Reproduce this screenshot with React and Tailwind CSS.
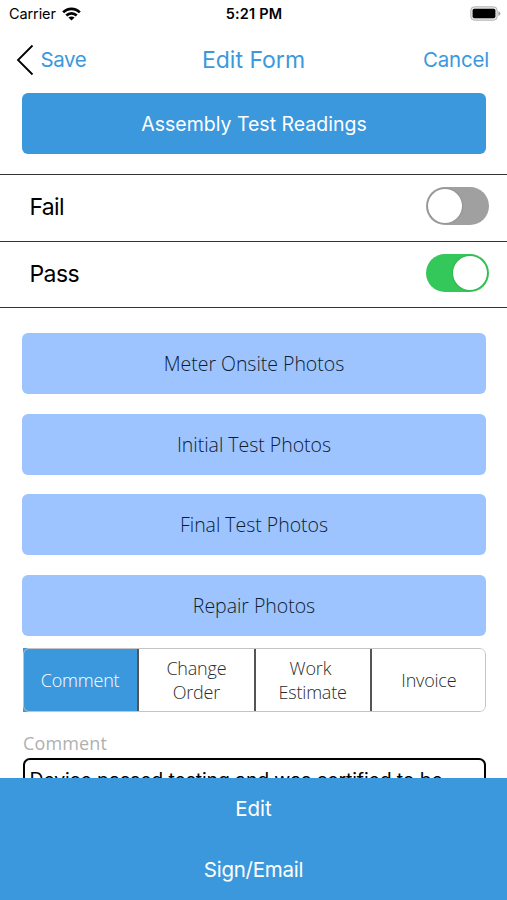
import { useState } from 'react';

const photoButtons = ['Meter Onsite Photos', 'Initial Test Photos', 'Final Test Photos', 'Repair Photos'];

const tabs = [
  { key: 'comment', lines: ['Comment'] },
  { key: 'change', lines: ['Change', 'Order'] },
  { key: 'estimate', lines: ['Work ', 'Estimate'] },
  { key: 'invoice', lines: ['Invoice'] },
];

const StatusBar = () => (
  <div className="grid grid-cols-3 items-center h-[27px] pl-[9px] pr-[6px] text-black">
    <div className="flex items-center gap-[6px]">
      <span className="text-[14.5px] pt-px tracking-[-0.1px]">Carrier</span>
      <svg width="19" height="14" viewBox="0 0 19 14" fill="none" stroke="#000" strokeWidth="2.7">
        <path d="M1.2 5.4 C5.8 0.6 13.2 0.6 17.8 5.4" />
        <path d="M4.3 8.5 C7.2 5.6 11.8 5.6 14.7 8.5" />
        <path d="M9.5 13.6 L6.4 10.6 C8.2 9.1 10.8 9.1 12.6 10.6 Z" fill="#000" stroke="none" />
      </svg>
    </div>
    <span className="text-[14.5px] pr-[2px] tracking-[0.2px] font-semibold text-center whitespace-nowrap">5:21 PM</span>
    <svg className="justify-self-end" width="31" height="15" viewBox="0 0 31 15">
      <rect x="0.8" y="0.8" width="26.4" height="13.4" rx="3.6" fill="#e4e4e4" stroke="#b4b4b4" strokeWidth="1" />
      <rect x="2.6" y="2.8" width="22.8" height="9.4" rx="1.8" fill="#000" />
      <path d="M28.4 5 Q30.4 6 30.4 7.5 Q30.4 9 28.4 10 Z" fill="#a0a0a0" />
    </svg>
  </div>
);

const Toggle = ({ on, onClick }) => (
  <button
    className={`flex items-center w-[63px] h-[38px] px-[2px] rounded-full ${on ? 'bg-[#34c759] justify-end' : 'bg-[#a0a0a0] justify-start'}`}
    onClick={onClick}
  >
    <span className="size-[34px] rounded-full bg-white shadow-[0_0_2px_rgba(0,0,0,0.25)]"></span>
  </button>
);

const App = () => {
  const [result, setResult] = useState('pass');
  const [activeTab, setActiveTab] = useState('comment');

  return (
    <div className="flex flex-col w-[507px] h-[900px] overflow-hidden bg-white font-['Inter',sans-serif]">
      <StatusBar />

      <header className="grid grid-cols-[1fr_auto_1fr] items-center h-[66px] pl-[16px] pr-[18px] text-[#3b98dd] shrink-0">
        <button className="flex items-center gap-[6.5px] text-[20.5px] tracking-[-0.4px]">
          <svg width="18" height="32" viewBox="0 0 18 32" fill="none" stroke="#000" strokeWidth="1.8">
            <path d="M16.5 1.5 L2 16 L16.5 30.5" />
          </svg>
          Save
        </button>
        <h1 className="text-[23px] pl-[2px]">Edit Form</h1>
        <button className="justify-self-end text-[20.5px] tracking-[-0.2px]">Cancel</button>
      </header>

      <main className="flex-1 min-h-0 overflow-hidden">
        <div className="px-[22px] pr-[21px]">
          <button className="block w-full h-[61px] pt-[2px] rounded-[6px] bg-[#3b98dd] text-white text-[19.5px]">
            Assembly Test Readings
          </button>
        </div>

        <div className="mt-[20px] border-b border-[#333]">
          <div className="flex items-center justify-between h-[67px] border-t border-[#333] pl-[29.5px] pr-[18px] pb-[4px]">
            <span className="text-[23px] tracking-[-0.7px] pt-[3px]">Fail</span>
            <Toggle on={result === 'fail'} onClick={() => setResult('fail')} />
          </div>
          <div className="flex items-center justify-between h-[66px] border-t border-[#333] pl-[29.5px] pr-[18px] pb-[3px]">
            <span className="text-[23px] tracking-[-0.6px] pt-[3px]">Pass</span>
            <Toggle on={result === 'pass'} onClick={() => setResult('pass')} />
          </div>
        </div>

        <div className="pl-[22px] pr-[21px] mt-[25px] font-['Open_Sans',sans-serif] font-light">
          <div className="flex flex-col gap-[19.5px]">
            {photoButtons.map(label => (
              <button key={label} className="h-[61px] rounded-[6px] bg-[#9dc4fe] text-[#0d1c2e] text-[19.5px] tracking-[-0.03px] pt-px">
                {label}
              </button>
            ))}
          </div>

          <div className="relative flex h-[64px] mt-[12.5px] ml-px rounded-r-[6px] overflow-hidden">
            {/* rounded outline sits on top of the square tab fill */}
            <div className="absolute inset-0 rounded-[6px] border border-[#c4c4c4] pointer-events-none"></div>
            {tabs.map(tab => (
              <button
                key={tab.key}
                className={`flex flex-col items-center justify-center flex-1 pt-px border-r-[2.5px] border-[#555] last:border-r-0 text-[18px] tracking-[-0.2px] leading-[23.5px] ${tab.key === activeTab ? 'bg-[#3b98dd] text-white' : 'text-[#2b2b2b]'}`}
                onClick={() => setActiveTab(tab.key)}
              >
                {tab.lines.map(line => (
                  <span key={line} className="whitespace-pre">{line}</span>
                ))}
              </button>
            ))}
          </div>

          <label className="block mt-[18px] ml-px h-[28px] leading-[27px] text-[18px] tracking-[0.15px] font-normal text-[#b0b0b0]">Comment</label>
        </div>
        <div className="ml-[23px] mr-[21px] h-[120px] border-[2.5px] border-black rounded-[7px] px-[4.5px] pt-[6px] text-[19.5px] tracking-[-0.16px] text-black whitespace-nowrap">
          Device passed testing and was certified to be
        </div>
      </main>

      <footer className="flex flex-col h-[122px] shrink-0 bg-[#3b98dd] text-white text-[20.5px]">
        <button className="h-[61px] pt-[2px]">Edit</button>
        <button className="h-[61px] pt-[2px] tracking-[-0.25px]">Sign/Email</button>
      </footer>
    </div>
  );
};

export default App;
